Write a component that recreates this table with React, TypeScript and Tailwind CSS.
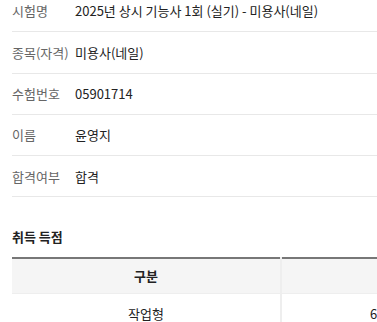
const rows: [string, string][] = [
  ["시험명", "2025년 상시 기능사 1회 (실기) - 미용사(네일)"],
  ["종목(자격)", "미용사(네일)"],
  ["수험번호", "05901714"],
  ["이름", "윤영지"],
  ["합격여부", "합격"],
];

export default function App() {
  return (
    <div
      className="h-[322px] w-[377px] overflow-hidden bg-white pl-3 text-[13px] text-[#222]"
      style={{ fontFamily: '"Noto Sans CJK KR", "Noto Sans", sans-serif' }}
    >
      <div className="-mt-[9px]">
        {rows.map(([label, value]) => (
          <div key={label} className="flex h-[41.3px] items-center border-b border-[#e8e8e8]">
            <span className="w-[63px] shrink-0 text-[#666]">{label}</span>
            <span className="whitespace-nowrap">{value}</span>
          </div>
        ))}
      </div>

      <h3 className="mt-[31px] text-[13px] font-bold leading-[18px]">취득 득점</h3>

      <table className="mt-[11px] w-[600px] border-collapse border-t-2 border-[#777] text-center">
        <thead>
          <tr className="h-[35px] bg-[#f5f5f5]">
            <th className="w-[269px] border-b border-[#eee] font-bold">구분</th>
            <th className="border-b border-l-2 border-[#eee] font-bold">득점</th>
          </tr>
        </thead>
        <tbody>
          <tr className="h-[40px]">
            <td>작업형</td>
            <td className="border-l-2 border-[#eee] pl-[88px] text-left">60</td>
          </tr>
        </tbody>
      </table>
    </div>
  );
}
